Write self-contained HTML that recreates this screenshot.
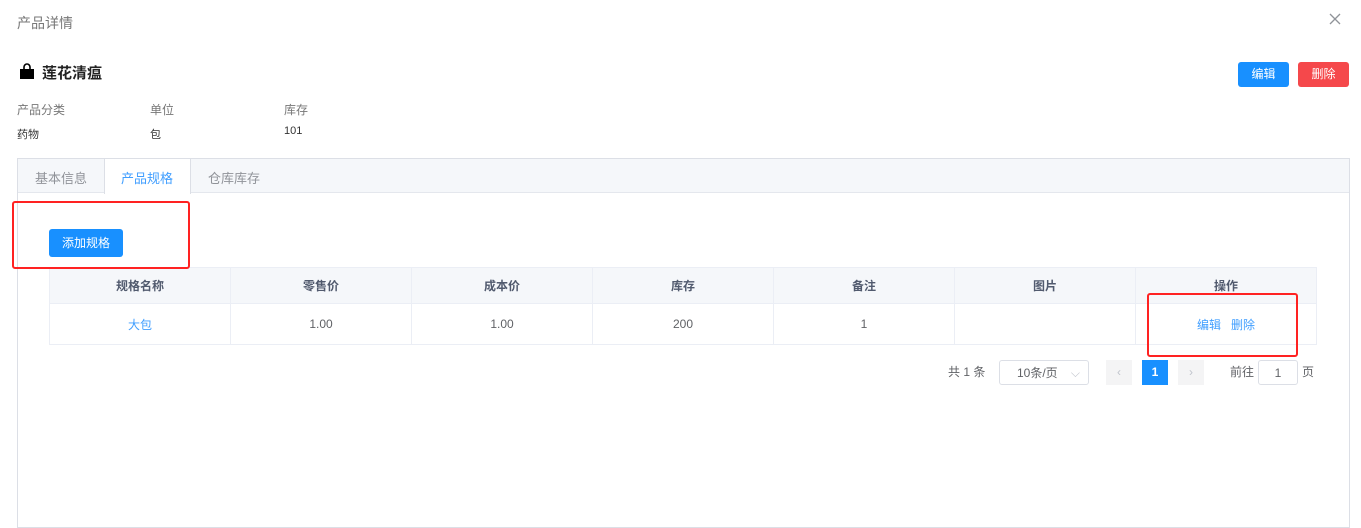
<!DOCTYPE html>
<html><head><meta charset="utf-8"><style>
*{margin:0;padding:0;box-sizing:border-box}
body{width:1361px;height:521px;background:#fff;font-family:"Liberation Sans","Noto Sans CJK SC",sans-serif;position:relative;overflow:hidden;color:#606266}
.a{position:absolute;white-space:nowrap}
.btn{position:absolute;color:#fff;font-size:12px;text-align:center;border-radius:3px}
table{position:absolute;left:49px;top:267px;border-collapse:collapse;font-size:12px}
td,th{border:1px solid #ebeef5;text-align:center;width:181px}
th{background:#f5f7fa;height:36px;color:#515a6e;font-weight:bold}
td{height:41px;color:#606266}
.pg{position:absolute;top:360px;height:25px;font-size:12px;line-height:25px;text-align:center}
</style></head><body>
<div class="a" style="left:17px;top:13px;font-size:14px;color:#777">产品详情</div>
<svg class="a" style="left:1329px;top:13px" width="12" height="12" viewBox="0 0 12 12"><path d="M1 1L11 11M11 1L1 11" stroke="#909399" stroke-width="1.3"/></svg>
<svg class="a" style="left:19px;top:63px" width="16" height="16" viewBox="0 0 16 16"><path d="M5 6V4a3 3 0 016 0v2" stroke="#000" stroke-width="1.6" fill="none"/><rect x="1" y="6" width="14" height="10" fill="#000"/></svg>
<div class="a" style="left:42px;top:62px;font-size:15px;color:#222;font-weight:bold">莲花清瘟</div>
<div class="btn" style="left:1238px;top:62px;width:51px;height:25px;line-height:25px;background:#1890ff">编辑</div>
<div class="btn" style="left:1298px;top:62px;width:51px;height:25px;line-height:25px;background:#f5484b">删除</div>
<div class="a" style="left:17px;top:101px;font-size:12px;color:#777">产品分类</div>
<div class="a" style="left:150px;top:101px;font-size:12px;color:#777">单位</div>
<div class="a" style="left:284px;top:101px;font-size:12px;color:#777">库存</div>
<div class="a" style="left:17px;top:126px;font-size:11px;color:#333">药物</div>
<div class="a" style="left:150px;top:126px;font-size:11px;color:#333">包</div>
<div class="a" style="left:284px;top:125px;font-size:11px;color:#333">101</div>
<div class="a" style="left:17px;top:158px;width:1333px;height:370px;border:1px solid #dcdfe6"></div>
<div class="a" style="left:18px;top:159px;width:1331px;height:34px;background:#f5f7fa;border-bottom:1px solid #e4e7ed"></div>
<div class="a" style="left:35px;top:168px;font-size:13px;color:#909399">基本信息</div>
<div class="a" style="left:104px;top:159px;width:87px;height:35px;background:#fff;border-left:1px solid #dcdfe6;border-right:1px solid #dcdfe6"></div>
<div class="a" style="left:121px;top:168px;font-size:13px;color:#409eff">产品规格</div>
<div class="a" style="left:208px;top:168px;font-size:13px;color:#909399">仓库库存</div>
<div class="btn" style="left:49px;top:229px;width:74px;height:28px;line-height:28px;background:#1890ff">添加规格</div>
<table><tr><th>规格名称</th><th>零售价</th><th>成本价</th><th>库存</th><th>备注</th><th>图片</th><th>操作</th></tr>
<tr><td style="color:#409eff">大包</td><td>1.00</td><td>1.00</td><td>200</td><td>1</td><td></td><td style="color:#409eff">编辑&nbsp;&nbsp;&nbsp;删除</td></tr></table>
<div class="a" style="left:12px;top:201px;width:178px;height:68px;border:2px solid #f22;border-radius:3px"></div>
<div class="a" style="left:1147px;top:293px;width:151px;height:64px;border:2px solid #f22;border-radius:3px"></div>
<div class="pg" style="left:948px">共 1 条</div>
<div class="pg" style="left:999px;width:90px;border:1px solid #dcdfe6;border-radius:3px;text-align:left;padding-left:17px">10条/页<span style="position:absolute;right:8px;color:#c0c4cc">⌵</span></div>
<div class="pg" style="left:1106px;width:26px;background:#f4f4f5;color:#c0c4cc">‹</div>
<div class="pg" style="left:1142px;width:26px;background:#1890ff;color:#fff;font-weight:bold">1</div>
<div class="pg" style="left:1178px;width:26px;background:#f4f4f5;color:#c0c4cc">›</div>
<div class="pg" style="left:1230px">前往</div>
<div class="pg" style="left:1258px;width:40px;border:1px solid #dcdfe6;border-radius:3px">1</div>
<div class="pg" style="left:1302px">页</div>
</body></html>
